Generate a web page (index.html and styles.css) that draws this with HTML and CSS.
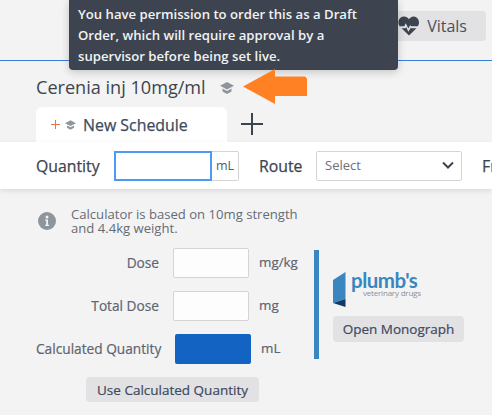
FILE: index.html
```html
<!DOCTYPE html>
<html lang="en">
<head>
<meta charset="utf-8">
<title>Cerenia inj 10mg/ml</title>
<link rel="stylesheet" href="styles.css">
</head>
<body>
<header class="topbar">
  <button class="vitals">
    <svg class="vitals-icon" viewBox="0 0 22 20" width="22" height="20"><path fill="#3d444f" d="M11 3.200C9.600 1.200 7.600.4 5.600.6 2.500.9.4 3.400.4 6.300c0 1.600.5 2.900 1.300 4h4.600l1.500-3 2.500 5.200 2-3.400.7 1.200h6.700c.8-1.100 1.300-2.400 1.300-4 0-2.900-2.100-5.400-5.200-5.700C14.400.4 12.400 1.200 11 3.200z"/><path fill="#3d444f" d="M3.500 12.200h3.900l.7-1.300 2.300 4.800 2.500-4.200.5.700h5.100L11 19.500z"/></svg>
    Vitals
  </button>
</header>
<div class="tooltip">You have permission to order this as a Draft Order, which will require approval by a supervisor before being set live.</div>
<svg class="arrow" viewBox="0 0 64 35" width="64" height="35"><path fill="#ff8124" d="M0 17.500 32 0v7.500h30l2 2V27H32v8z"/></svg>

<main>
  <h1 class="title">Cerenia inj 10mg/ml
    <svg class="cap" viewBox="0 0 14 12" width="14" height="12"><path fill="#8f959c" d="M7 0 14 3.700 7 7.400 0 3.700z"/><path fill="#8f959c" d="M2.500 6.600 7 9l4.500-2.400v2.900L7 12 2.500 9.500z"/></svg>
  </h1>
  <div class="tabs">
    <div class="tab">
      <svg class="tab-plus" viewBox="0 0 9 9" width="9" height="9"><path d="M4.500 0v9M0 4.500h9" stroke="#e8764a" stroke-width="1" fill="none"/></svg>
      <svg class="cap-small" viewBox="0 0 14 12" width="11" height="10"><path fill="#8f959c" d="M7 0 14 3.700 7 7.400 0 3.700z"/><path fill="#8f959c" d="M2.500 6.600 7 9l4.500-2.400v2.900L7 12 2.500 9.500z"/></svg>
      <span>New Schedule</span>
    </div>
    <svg class="add" viewBox="0 0 22 22" width="22" height="22"><path stroke="#3d444f" stroke-width="2" fill="none" d="M11 0v22M0 11h22"/></svg>
  </div>
  <section class="order-bar">
    <label class="bar-label qty-label">Quantity</label>
    <div class="qty">
      <input class="qty-input" type="text">
      <span class="qty-unit">mL</span>
    </div>
    <label class="bar-label route">Route</label>
    <div class="select"><span>Select</span>
      <svg viewBox="0 0 12 8" width="12" height="8"><path d="M1 1.500 6 6.500 11 1.500" fill="none" stroke="#3d444f" stroke-width="2"/></svg>
    </div>
    <label class="bar-label freq">Frequency</label>
  </section>
  <section class="calc">
    <div class="note">
      <svg viewBox="0 0 18 18" width="18" height="18"><circle cx="9" cy="9" r="9" fill="#8f959c"/><circle cx="9" cy="5" r="1.500" fill="#f3f3f3"/><path d="M7.200 7.500h2.800v5.200h1v1.300H7.200v-1.300h1V8.800h-1z" fill="#f3f3f3"/></svg>
      <p>Calculator is based on 10mg strength and 4.4kg weight.</p>
    </div>
    <div class="calc-body">
      <div class="fields">
        <div class="field"><label>Dose</label><div class="box"></div><span>mg/kg</span></div>
        <div class="field"><label>Total Dose</label><div class="box"></div><span>mg</span></div>
        <div class="field result"><label>Calculated Quantity</label><div class="box filled"></div><span>mL</span></div>
        <button class="btn use">Use Calculated Quantity</button>
      </div>
      <aside class="monograph">
        <div class="logo">
          <svg viewBox="0 0 13 35" width="13" height="35"><path fill="#3a86c0" d="M0 8 12.500 0v27L0 31z"/><path fill="#123a63" d="M0 31 12.500 27v8z"/></svg>
          <div class="logo-text"><span class="logo-name">plumb's</span><span class="logo-sub">veterinary drugs</span></div>
        </div>
        <button class="btn">Open Monograph</button>
      </aside>
    </div>
  </section>
</main>
</body>
</html>
```
FILE: styles.css
```css
* { box-sizing: border-box; }
html, body { margin: 0; height: 100%; }
body {
  position: relative;
  width: 492px;
  height: 415px;
  overflow: hidden;
  background: #f3f3f3;
  color: #3d444f;
  font-family: "Open Sans", "Liberation Sans", sans-serif;
}
.topbar {
  height: 61px;
  border-bottom: 1px solid #3a7fd5;
  padding: 11px 6px 0 0;
  display: flex;
  justify-content: flex-end;
  align-items: flex-start;
}
.vitals {
  width: 100px;
  height: 30px;
  border: 0;
  border-radius: 4px;
  background: #e2e2e4;
  color: #4a505a;
  font: 16px "Open Sans", sans-serif;
  display: flex;
  align-items: center;
  justify-content: flex-end;
  padding: 0 19px 0 0;
  gap: 7px;
}
.tooltip {
  position: absolute;
  left: 69px;
  top: 0;
  width: 329px;
  height: 70px;
  padding: 4px 9px;
  background: #3d444f;
  border-radius: 0 0 4px 4px;
  color: #f1f2f3;
  font-size: 13.15px;
  font-weight: 600;
  line-height: 21px;
  box-shadow: 0 2px 8px rgba(0,0,0,.2);
}
.arrow { position: absolute; left: 243px; top: 69px; }
.title {
  margin: 0;
  padding: 6px 0 0 36px;
  height: 46px;
  font-size: 18.1px;
  line-height: 26px;
  font-weight: 400;
  color: #3d444f;
  display: flex;
  align-items: center;
  gap: 15px;
}
.cap { margin-top: 2px; margin-left: -1px; }
.tabs {
  display: flex;
  align-items: center;
  padding-left: 36px;
  height: 35px;
  gap: 14px;
}
.tab {
  width: 191px;
  height: 35px;
  background: #fff;
  border-radius: 6px 6px 0 0;
  display: flex;
  align-items: center;
  padding-left: 15px;
  font-size: 15.9px;
  font-weight: 500;
  -webkit-text-stroke: .25px;
  color: #3d4a60;
}
.tab-plus { margin-right: 5px; }
.cap-small { margin-right: 7px; }
.add { margin-top: -2px; }
.order-bar {
  height: 47px;
  background: #fff;
  box-shadow: 0 2px 5px rgba(0,0,0,.1);
  display: flex;
  align-items: center;
  padding-left: 36px;
  white-space: nowrap;
  position: relative;
}
.bar-label { font-size: 15.8px; font-weight: 500; -webkit-text-stroke: .25px; color: #3d444f; flex: none; }
.qty-label { width: 78px; }
.qty { display: flex; flex: none; }
.qty-input {
  width: 98px;
  height: 30px;
  border: 2px solid #4d9af5;
  outline: 0;
  background: #fff;
  padding: 0;
}
.qty-unit {
  width: 27px;
  height: 30px;
  border: 1px solid #d4d4d4;
  border-left: 0;
  border-radius: 0 2px 2px 0;
  font-size: 12.5px;
  line-height: 27px;
  text-align: center;
  color: #555b65;
}
.route { margin-left: 20px; width: 57px; }
.select {
  width: 146px;
  height: 30px;
  border: 1px solid #d4d4d4;
  border-radius: 2px;
  padding: 0 7px 2px 8px;
  font-size: 13px;
  color: #6b7078;
  display: flex;
  align-items: center;
  justify-content: space-between;
  flex: none;
}
.freq { margin-left: 20px; }
.calc { padding: 0 0 0 36px; }
.note {
  display: flex;
  gap: 15px;
  height: 59px;
  padding: 19px 0 0 2px;
}
.note svg { margin-top: 4px; flex: none; }
.note p {
  margin: 0;
  width: 240px;
  font-size: 13.1px;
  line-height: 13.5px;
  color: #666c76;
}
.calc-body { display: flex; align-items: flex-start; }
.fields {
  width: 278px;
  display: flex;
  flex-direction: column;
  gap: 13px;
}
.field {
  display: grid;
  grid-template-columns: 123px 76px auto;
  column-gap: 14px;
  align-items: center;
  height: 30px;
  font-size: 13.4px;
  font-weight: 500;
  -webkit-text-stroke: .2px;
  color: #5e6470;
}
.field label { text-align: right; white-space: nowrap; margin-top: -2px; font-size: 13.7px; font-weight: 500; color: #5e6470; }
.field span { margin-left: -4px; white-space: nowrap; margin-top: -2px; }
.box {
  height: 30px;
  background: #fdfdfd;
  border: 1px solid #d4d4d4;
  border-radius: 2px;
}
.result { grid-template-columns: 125px 76px auto; }
.filled { background: #1263c2; border: 0; }
.btn {
  border: 0;
  border-radius: 4px;
  background: #e2e2e4;
  color: #3d4a60;
  font: 500 13.5px "Open Sans", sans-serif;
  -webkit-text-stroke: .2px;
  height: 26px;
  padding: 0;
}
.use { width: 173px; height: 25px; margin-left: 50px; }
.monograph {
  width: 150px;
  height: 109px;
  margin-top: 2px;
  border-left: 5px solid #3a86c0;
  padding: 22px 0 0 14px;
  display: flex;
  flex-direction: column;
  align-items: flex-start;
  gap: 9px;
}
.monograph .btn { width: 131px; }
.logo { display: flex; gap: 5px; height: 35px; }
.logo-text { display: flex; flex-direction: column; }
.logo-name {
  font: 700 20.5px/18px "Lato", sans-serif;
  letter-spacing: -.5px;
  color: #3a86c0;
  margin-top: -1px;
}
.logo-sub {
  font-size: 8px;
  line-height: 8px;
  letter-spacing: -.2px;
  color: #8b8f94;
  margin: 0 0 0 12px;
  white-space: nowrap;
}
```
